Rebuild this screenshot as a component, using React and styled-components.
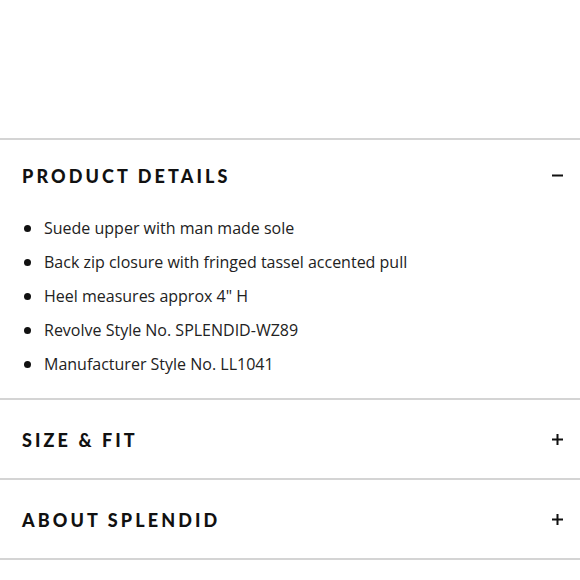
import styled, { createGlobalStyle } from "styled-components";

const Global = createGlobalStyle`
  html, body { margin: 0; padding: 0; background: #fff; }
  body { font-family: "Open Sans", sans-serif; color: #111; }
`;

const Page = styled.div`
  width: 580px;
  padding-top: 138px;
`;

const Section = styled.section`
  border-top: 2px solid #d4d4d4;
  &:last-child { border-bottom: 2px solid #d4d4d4; }
`;

const Header = styled.div`
  height: ${(p) => p.$h || 78}px;
  display: flex;
  align-items: center;
  justify-content: space-between;
  padding: 0 17px 0 22px;
`;

const Title = styled.h2`
  margin: 0;
  padding-top: 1px;
  font-family: "Lato", sans-serif;
  font-weight: 900;
  font-size: 18px;
  letter-spacing: 3.1px;
  color: #111;
`;

const Toggle = styled.svg`
  width: 11px;
  height: 11px;
  display: block;
`;

const List = styled.ul`
  list-style: none;
  margin: 0;
  padding: 0 22px 17px 24px;
`;

const Item = styled.li`
  display: flex;
  align-items: center;
  height: 34px;
  font-size: 16px;
  color: #222;
  &::before {
    content: "";
    width: 7px;
    height: 7px;
    border-radius: 50%;
    background: #111;
    margin-right: 13px;
  }
`;

function Icon({ open }) {
  return (
    <Toggle viewBox="0 0 11 11">
      <rect x="0" y="4.5" width="11" height="2" fill="#111" />
      {!open && <rect x="4.5" y="0" width="2" height="11" fill="#111" />}
    </Toggle>
  );
}

const details = [
  "Suede upper with man made sole",
  "Back zip closure with fringed tassel accented pull",
  'Heel measures approx 4" H',
  "Revolve Style No. SPLENDID-WZ89",
  "Manufacturer Style No. LL1041",
];

export default function App() {
  return (
    <Page>
      <Global />
      <Section>
        <Header $h={71}>
          <Title>PRODUCT DETAILS</Title>
          <Icon open />
        </Header>
        <List>
          {details.map((d) => (
            <Item key={d}>{d}</Item>
          ))}
        </List>
      </Section>
      <Section>
        <Header>
          <Title>SIZE &amp; FIT</Title>
          <Icon />
        </Header>
      </Section>
      <Section>
        <Header>
          <Title>ABOUT SPLENDID</Title>
          <Icon />
        </Header>
      </Section>
    </Page>
  );
}
